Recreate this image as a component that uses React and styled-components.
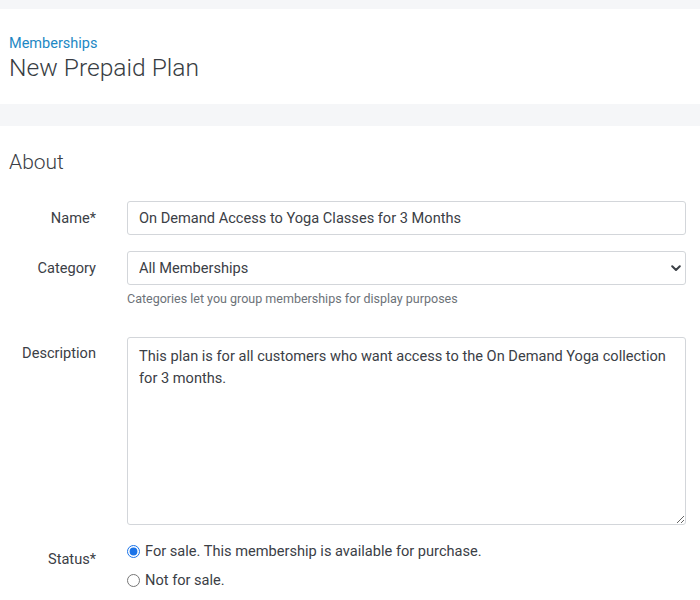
import React from "react";
import styled, { createGlobalStyle } from "styled-components";

const Global = createGlobalStyle`
  html, body { margin: 0; padding: 0; background: #fff; }
  body { font-family: Roboto, "Liberation Sans", Arial, sans-serif; color: #3b4046; }
  * { box-sizing: border-box; }
`;

const Page = styled.div`
  width: 700px;
  display: flex;
  flex-direction: column;
`;

const Band = styled.div`
  height: ${(p) => p.$h}px;
  background: #f5f6f8;
`;

const Header = styled.header`
  height: 95px;
  padding: 27px 9px 0;
  display: flex;
  flex-direction: column;
`;

const Crumb = styled.a`
  color: #1d88c4;
  font-size: 14.5px;
  line-height: 16px;
  text-decoration: none;
`;

const Title = styled.h1`
  margin: 1px 0 0;
  font-size: 24.6px;
  font-weight: 300;
  line-height: 30px;
  color: #383d43;
`;

const Content = styled.main`
  padding: 22px 14px 20px 9px;
`;

const Section = styled.h2`
  margin: 0 0 25px;
  font-size: 21px;
  font-weight: 300;
  line-height: 28px;
  color: #3b4046;
`;

const Form = styled.div`
  display: grid;
  grid-template-columns: 87px 1fr;
  column-gap: 31px;
  row-gap: 16px;
  align-items: start;
`;

const Label = styled.label`
  text-align: right;
  font-size: 14.6px;
  color: #3b4046;
  line-height: 20px;
  padding-top: ${(p) => p.$top ?? 7}px;
`;

const Field = styled.div`
  display: flex;
  flex-direction: column;
  margin-bottom: ${(p) => p.$mb ?? 0}px;
`;

const Input = styled.input`
  width: 100%;
  height: 34px;
  border: 1px solid #d3d6da;
  border-radius: 3px;
  padding: 0 11px;
  font-family: inherit;
  font-size: 14.6px;
  color: #3b4046;
  outline: none;
`;

const SelectWrap = styled.div`
  position: relative;
`;

const Select = styled.select`
  width: 100%;
  height: 34px;
  border: 1px solid #d3d6da;
  border-radius: 3px;
  padding: 0 11px;
  background: #fff;
  font-family: inherit;
  font-size: 14.6px;
  color: #3b4046;
  appearance: none;
  outline: none;
`;

const Chevron = styled.svg`
  position: absolute;
  right: 5px;
  top: 14px;
  pointer-events: none;
`;

const Help = styled.div`
  margin-top: 6px;
  font-size: 12.5px;
  color: #6c7278;
  line-height: 16px;
`;

const TextArea = styled.textarea`
  width: 100%;
  height: 188px;
  border: 1px solid #d3d6da;
  border-radius: 3px;
  padding: 7px 11px;
  font-family: inherit;
  font-size: 14.6px;
  line-height: 22px;
  color: #3b4046;
  resize: vertical;
  outline: none;
`;

const Radios = styled.div`
  display: flex;
  flex-direction: column;
  gap: 8px;
`;

const RadioLabel = styled.label`
  display: flex;
  align-items: center;
  gap: 5px;
  font-size: 14.6px;
  color: #3b4046;
  line-height: 21px;
`;

const Radio = styled.input`
  margin: 0;
  width: 13px;
  height: 13px;
  accent-color: #1a73e8;
`;

export default function App() {
  return (
    <Page>
      <Global />
      <Band $h={9} />
      <Header>
        <Crumb href="#">Memberships</Crumb>
        <Title>New Prepaid Plan</Title>
      </Header>
      <Band $h={22} />
      <Content>
        <Section>About</Section>
        <Form>
          <Label>Name*</Label>
          <Field>
            <Input defaultValue="On Demand Access to Yoga Classes for 3 Months" />
          </Field>

          <Label>Category</Label>
          <Field $mb={14}>
            <SelectWrap>
              <Select defaultValue="all">
                <option value="all">All Memberships</option>
              </Select>
              <Chevron width="10" height="7" viewBox="0 0 10 7">
                <path d="M1.2 1.2 L5 5 L8.8 1.2" fill="none" stroke="#3b4046" strokeWidth="2" strokeLinecap="round" strokeLinejoin="round" />
              </Chevron>
            </SelectWrap>
            <Help>Categories let you group memberships for display purposes</Help>
          </Field>

          <Label $top={6}>Description</Label>
          <Field>
            <TextArea defaultValue="This plan is for all customers who want access to the On Demand Yoga collection for 3 months." />
          </Field>

          <Label $top={8}>Status*</Label>
          <Radios>
            <RadioLabel>
              <Radio type="radio" name="status" defaultChecked />
              For sale. This membership is available for purchase.
            </RadioLabel>
            <RadioLabel>
              <Radio type="radio" name="status" />
              Not for sale.
            </RadioLabel>
          </Radios>
        </Form>
      </Content>
    </Page>
  );
}
